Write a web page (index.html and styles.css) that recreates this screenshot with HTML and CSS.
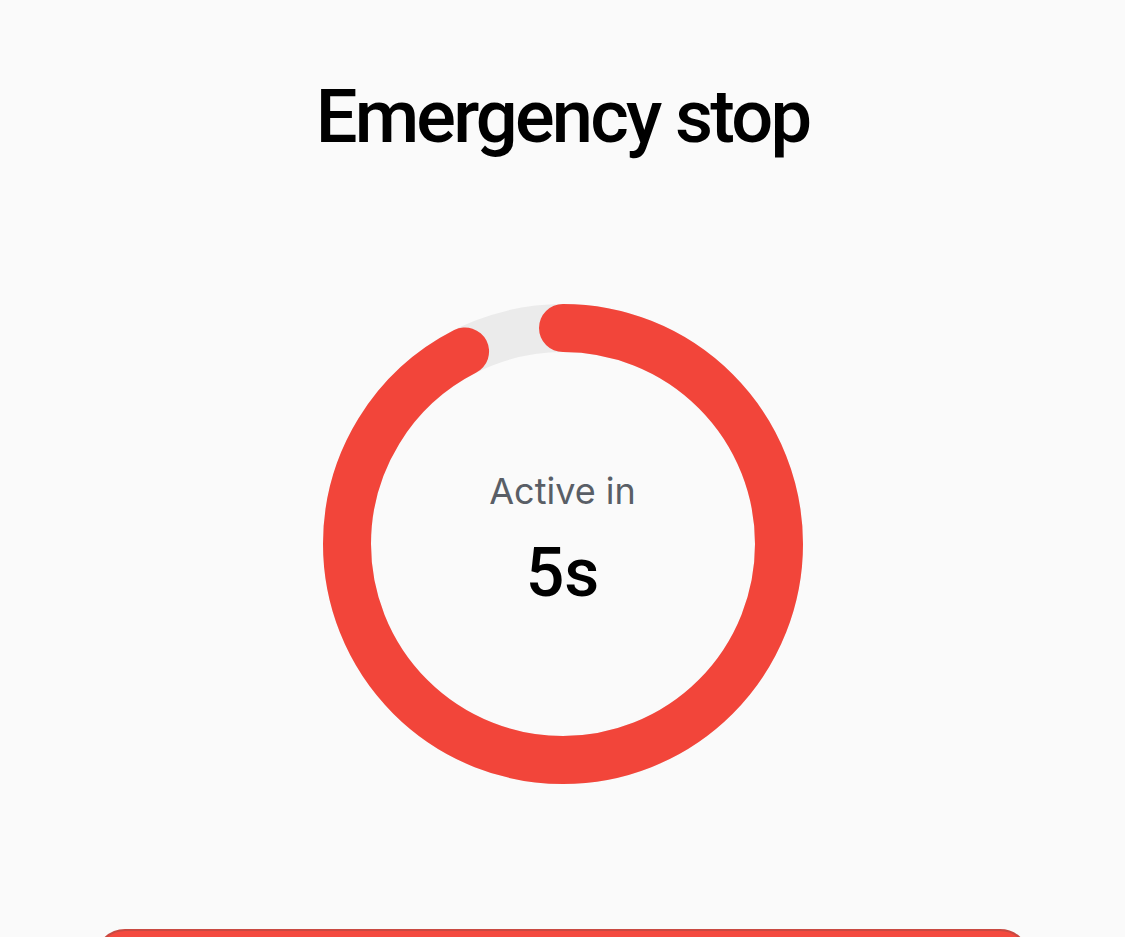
FILE: index.html
```html
<!DOCTYPE html>
<html>
<head>
<meta charset="utf-8">
<link rel="stylesheet" href="styles.css">
</head>
<body>
<main class="screen">
  <h1 class="title">Emergency stop</h1>
  <div class="timer">
    <svg class="ring" width="480" height="480" viewBox="0 0 480 480">
      <circle cx="240" cy="240" r="216" fill="none" stroke="#ebebeb" stroke-width="48"/>
      <circle cx="240" cy="240" r="216" fill="none" stroke="#f2453a" stroke-width="48" stroke-linecap="round" stroke-dasharray="1255 1400" transform="rotate(-90 240 240)"/>
    </svg>
    <div class="timer-text">
      <div class="label">Active in</div>
      <div class="count">5s</div>
    </div>
  </div>
  <button class="cancel" type="button"></button>
</main>
</body>
</html>
```
FILE: styles.css
```css
html, body {
  margin: 0;
  padding: 0;
  background: #fafafa;
}
.screen {
  display: flex;
  flex-direction: column;
  align-items: center;
  height: 937px;
  overflow: hidden;
}
.title {
  margin: 72px 0 0;
  font-family: Roboto, "Liberation Sans", sans-serif;
  font-weight: 500;
  font-size: 74px;
  line-height: 90px;
  color: #000;
  letter-spacing: -2.8px;
}
.timer {
  display: grid;
  margin-top: 142px;
  width: 480px;
  height: 480px;
}
.ring, .timer-text {
  grid-area: 1 / 1;
}
.timer-text {
  display: flex;
  flex-direction: column;
  align-items: center;
  padding-top: 167px;
}
.label {
  font-family: Inter, "Noto Sans", sans-serif;
  font-size: 36px;
  line-height: 40px;
  color: #595e66;
}
.count {
  font-family: Roboto, "Liberation Sans", sans-serif;
  font-weight: 500;
  font-size: 68px;
  line-height: 80px;
  color: #000;
  margin-top: 22px;
}
.cancel {
  margin-top: 145px;
  width: 935px;
  height: 100px;
  border: 2px solid #c94a42;
  border-radius: 30px;
  background: #f44a3f;
  flex-shrink: 0;
}
```
